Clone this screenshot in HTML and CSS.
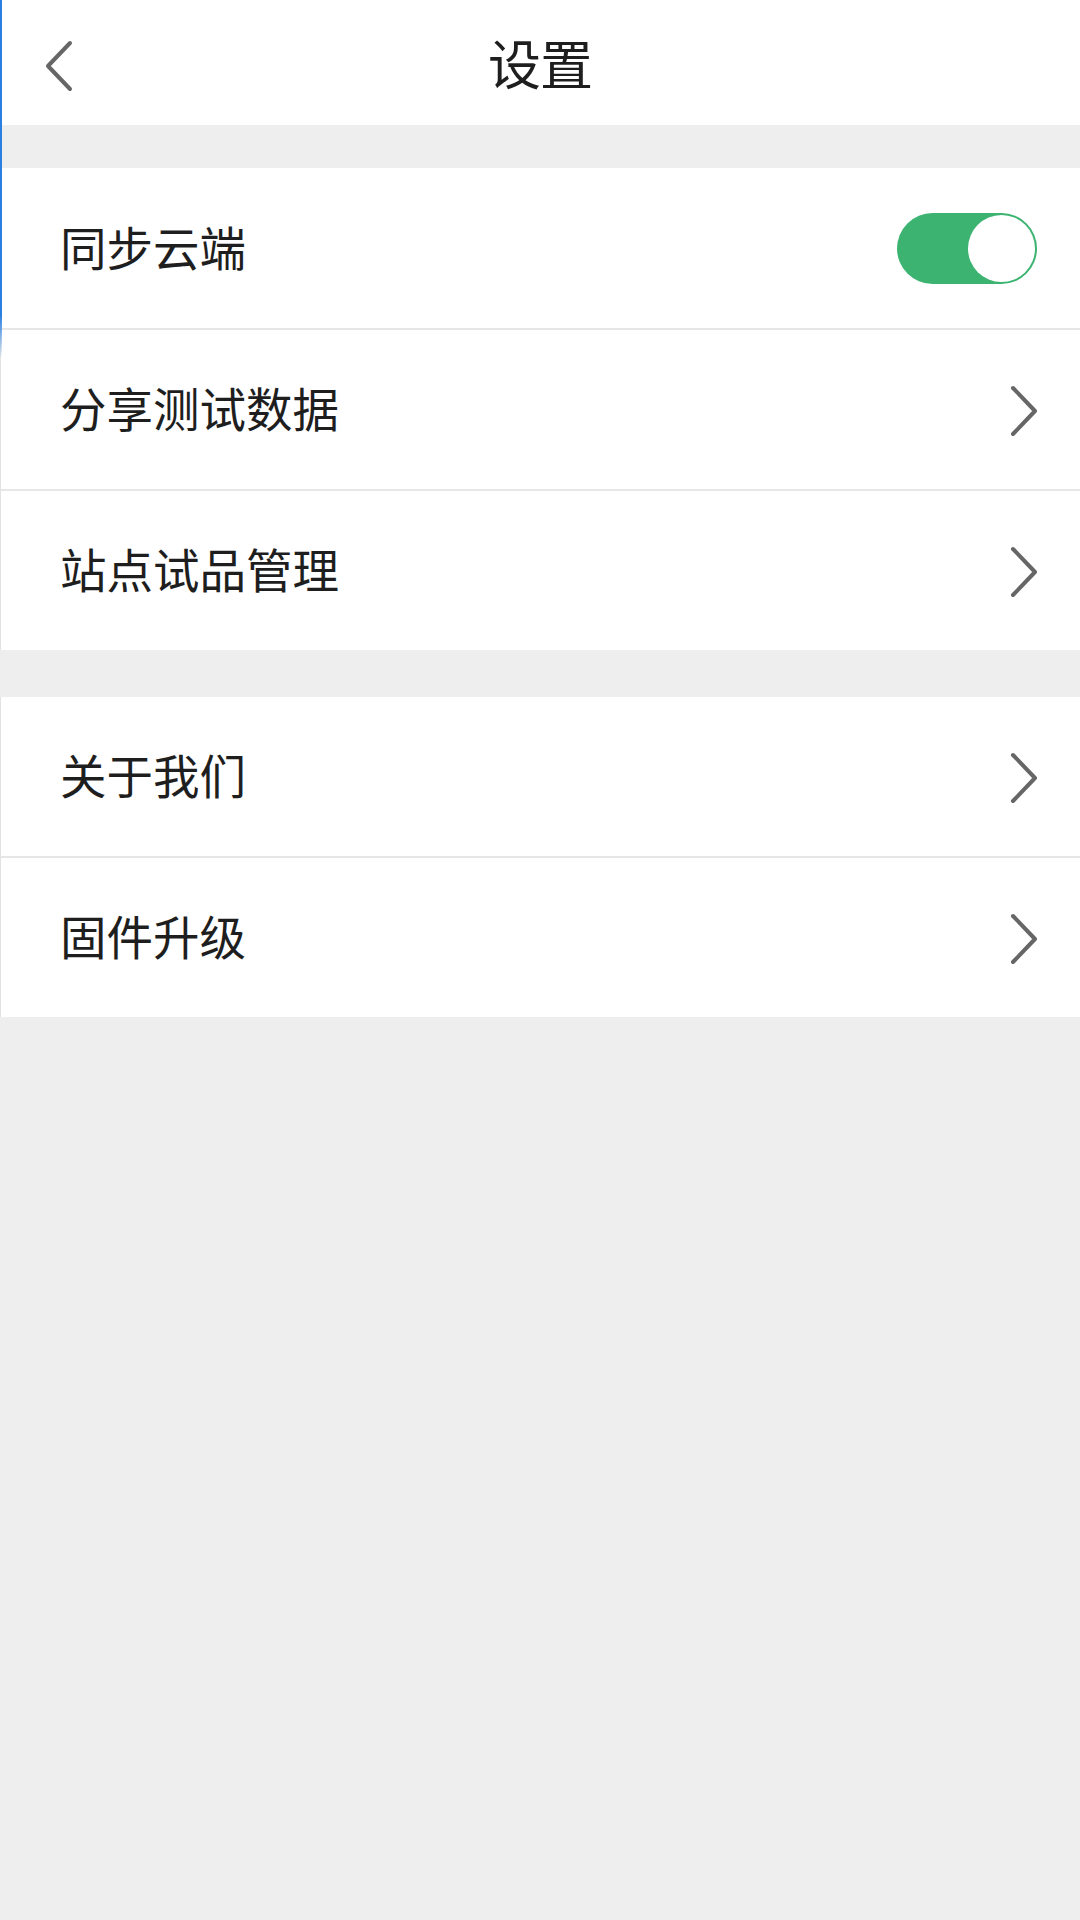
FILE: index.html
```html
<!DOCTYPE html>
<html lang="zh-CN">
<head>
<meta charset="utf-8">
<title>设置</title>
<link rel="stylesheet" href="styles.css">
</head>
<body>
<div class="edge-line"></div>
<header class="topbar">
  <div class="back">
    <svg width="30" height="52" viewBox="0 0 30 52"><path d="M26 3 L4 26 L26 49" fill="none" stroke="#666" stroke-width="4" stroke-linecap="round" stroke-linejoin="round"/></svg>
  </div>
  <h1 class="title">设置</h1>
  <div></div>
</header>
<section class="group first">
  <div class="row row-first">
    <span class="label">同步云端</span>
    <div class="toggle"><div class="knob"></div></div>
  </div>
  <div class="row">
    <span class="label">分享测试数据</span>
    <svg class="chev" width="28" height="52" viewBox="0 0 28 52"><path d="M3 3 L25 26 L3 49" fill="none" stroke="#666" stroke-width="4" stroke-linecap="round" stroke-linejoin="round"/></svg>
  </div>
  <div class="row">
    <span class="label">站点试品管理</span>
    <svg class="chev" width="28" height="52" viewBox="0 0 28 52"><path d="M3 3 L25 26 L3 49" fill="none" stroke="#666" stroke-width="4" stroke-linecap="round" stroke-linejoin="round"/></svg>
  </div>
</section>
<section class="group second">
  <div class="row">
    <span class="label">关于我们</span>
    <svg class="chev" width="28" height="52" viewBox="0 0 28 52"><path d="M3 3 L25 26 L3 49" fill="none" stroke="#666" stroke-width="4" stroke-linecap="round" stroke-linejoin="round"/></svg>
  </div>
  <div class="row">
    <span class="label">固件升级</span>
    <svg class="chev" width="28" height="52" viewBox="0 0 28 52"><path d="M3 3 L25 26 L3 49" fill="none" stroke="#666" stroke-width="4" stroke-linecap="round" stroke-linejoin="round"/></svg>
  </div>
</section>
</body>
</html>
```
FILE: styles.css
```css
html, body {
  margin: 0;
  padding: 0;
}
body {
  background: #eeeeee;
  min-height: 1920px;
  font-family: "Noto Sans CJK SC", "Noto Sans", sans-serif;
  color: #1e1e1e;
  position: relative;
}
.edge-line {
  position: absolute;
  left: 0;
  top: 0;
  width: 2px;
  height: 358px;
  background: linear-gradient(to bottom, #2a7fe0 0%, #2a7fe0 88%, rgba(42,127,224,0) 100%);
  z-index: 5;
}
.topbar {
  height: 125px;
  background: #ffffff;
  display: grid;
  grid-template-columns: 1fr auto 1fr;
  align-items: center;
}
.back {
  padding-left: 44px;
  padding-top: 7px;
  display: flex;
  align-items: center;
}
.title {
  margin: 0;
  font-size: 53px;
  font-weight: 400;
  line-height: 1;
  color: #1e1e1e;
  padding-top: 0;
  letter-spacing: -1px;
}
.group {
  background: #ffffff;
  border-left: 1px solid #e2e2e2;
}
.group.first {
  margin-top: 43px;
}
.group.second {
  margin-top: 47px;
}
.row {
  height: 159px;
  display: flex;
  align-items: center;
  justify-content: space-between;
  padding: 0 42px 0 59px;
  box-sizing: border-box;
}
.row-first {
  height: 160px;
  padding-right: 43px;
}
.row + .row {
  border-top: 2px solid #e6e6e6;
  height: 161px;
}
.label {
  font-size: 46.5px;
  line-height: 1;
  color: #1e1e1e;
  margin-top: -4px;
}
.chev {
  display: block;
  margin-top: 2px;
}
.toggle {
  width: 140px;
  height: 71px;
  box-sizing: border-box;
  padding: 2px;
  border-radius: 36px;
  background: #3cb371;
  display: flex;
  justify-content: flex-end;
}
.knob {
  width: 67px;
  height: 67px;
  border-radius: 50%;
  background: #ffffff;
}
```
